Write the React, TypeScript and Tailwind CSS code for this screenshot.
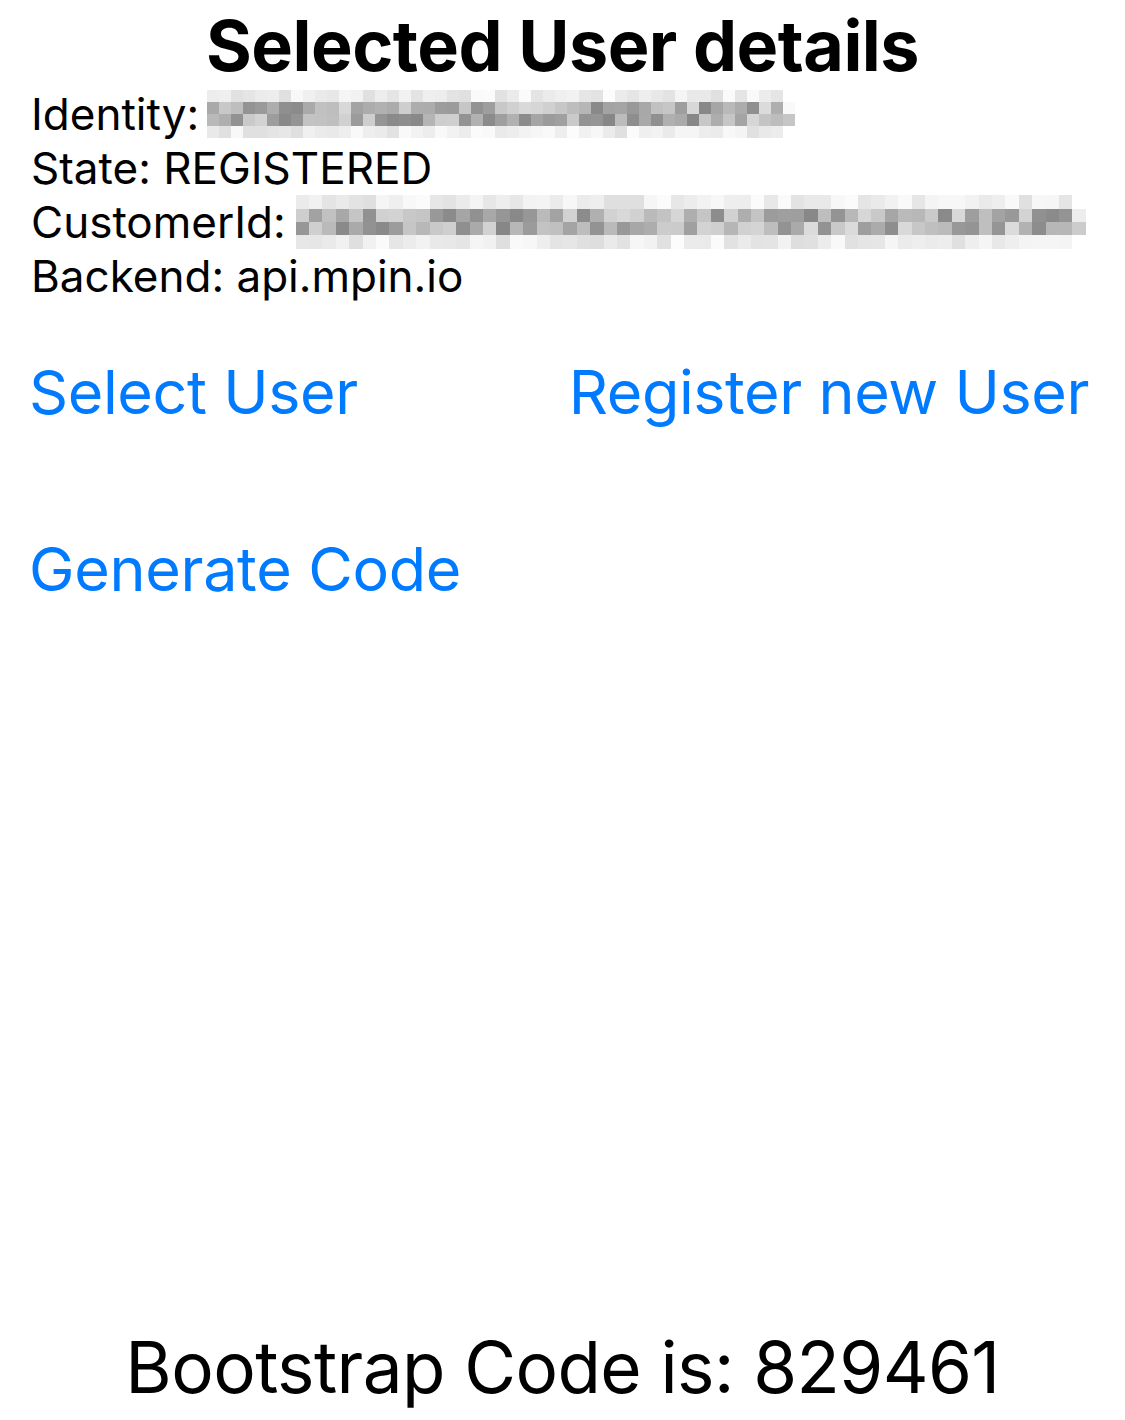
import React from "react";

// deterministic pseudo-random so the pixelated blur looks the same every render
function rng(seed: number) {
  let s = seed;
  return () => {
    s = (s * 9301 + 49297) % 233280;
    return s / 233280;
  };
}

function Pixelated({ cols, rows, cell, seed }: { cols: number; rows: number; cell: number; seed: number }) {
  const rand = rng(seed);
  const cells: { c: string }[] = [];
  for (let r = 0; r < rows; r++) {
    for (let c = 0; c < cols; c++) {
      const edge = r === 0 || r === rows - 1;
      const base = edge ? 222 + rand() * 30 : 135 + rand() * 85;
      const fade = c === cols - 1 ? 40 : 0;
      const v = Math.min(255, Math.round(base + fade));
      cells.push({ c: `rgb(${v},${v},${v})` });
    }
  }
  return (
    <div
      className="grid shrink-0"
      style={{ gridTemplateColumns: `repeat(${cols}, ${cell}px)`, gridAutoRows: `${cell}px` }}
    >
      {cells.map((x, i) => (
        <div key={i} style={{ backgroundColor: x.c }} />
      ))}
    </div>
  );
}

export default function App() {
  return (
    <div className="w-[1125px] h-[1420px] bg-white text-black flex flex-col font-['Inter','Liberation_Sans',sans-serif]">
      {/* Title */}
      <h1 className="text-center font-bold text-[70px] leading-[80px] tracking-[-0.5px] mt-[6px]">
        Selected User details
      </h1>

      {/* Details */}
      <div className="pl-[31px] mt-[1px] text-[44px] leading-[54px]">
        <div className="flex items-center gap-[8px]">
          <span>Identity:</span>
          <Pixelated cols={49} rows={4} cell={12} seed={7} />
        </div>
        <div>State: REGISTERED</div>
        <div className="flex items-center gap-[10px]">
          <span>CustomerId:</span>
          <Pixelated cols={59} rows={4} cell={13.4} seed={31} />
        </div>
        <div>Backend: api.mpin.io</div>
      </div>

      {/* Actions */}
      <div className="flex justify-between pl-[29px] pr-[36px] mt-[53px] text-[#007aff] text-[61px] leading-[72px] tracking-[-0.4px]">
        <button>Select User</button>
        <button>Register new User</button>
      </div>
      <div className="pl-[29px] mt-[105px] text-[#007aff] text-[61px] leading-[72px] tracking-[-0.3px]">
        <button>Generate Code</button>
      </div>

      <div className="flex-1" />

      {/* Result */}
      <div className="text-center text-[71px] leading-[90px] tracking-[-0.6px] mb-[8px]">
        Bootstrap Code is: 829461
      </div>
    </div>
  );
}
